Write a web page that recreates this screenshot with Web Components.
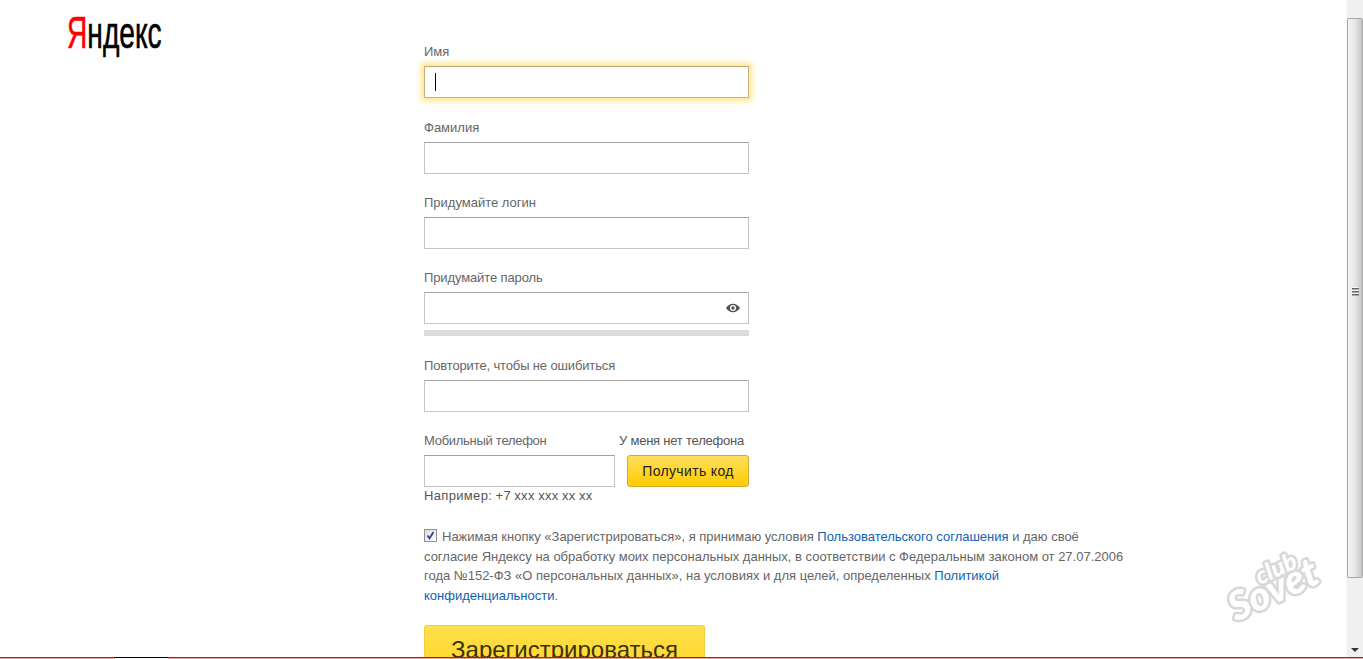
<!DOCTYPE html>
<html lang="ru"><head><meta charset="utf-8"><title>Регистрация</title>
<style>
html,body{margin:0;padding:0;height:659px;overflow:hidden;background:#fff;font:13px/15px "Liberation Sans",Arial,sans-serif;color:#555}
</style></head><body>
<y-page>
  <y-logo slot="logo"></y-logo>
  <y-field label="Имя" gap="22"><y-input focused></y-input></y-field>
  <y-field label="Фамилия"><y-input></y-input></y-field>
  <y-field label="Придумайте логин"><y-input></y-input></y-field>
  <y-field label="Придумайте пароль" gap="22" ls="-.12"><y-input eye></y-input><y-meter></y-meter></y-field>
  <y-field label="Повторите, чтобы не ошибиться" ls="-.14"><y-input></y-input></y-field>
  <y-phone></y-phone>
  <y-consent>Нажимая кнопку «Зарегистрироваться», я принимаю условия <a>Пользовательского соглашения</a> и даю своё<br>согласие Яндексу на обработку моих персональных данных, в соответствии с Федеральным законом от 27.07.2006<br>года №152-ФЗ «О персональных данных», на условиях и для целей, определенных <a>Политикой</a><br><a>конфиденциальности</a>.</y-consent>
  <y-button big>Зарегистрироваться</y-button>
  <y-scrollbar slot="bar"></y-scrollbar>
  <y-watermark slot="over"></y-watermark>
  <y-edge slot="over"></y-edge>
</y-page>
<script>
function def(name,html,init){
  customElements.define(name,class extends HTMLElement{
    constructor(){super();this.attachShadow({mode:'open'}).innerHTML=html;}
    connectedCallback(){if(init)init(this,this.shadowRoot);}
  });
}
def('y-page',`<style>
:host{display:flex;width:1363px;height:659px;position:relative;overflow:hidden}
.main{flex:1;min-width:0;position:relative;height:659px;overflow:hidden}
.logo{position:absolute;left:67px;top:9px}
.form{margin-left:424px;padding-top:44px;width:325px;display:flow-root}
</style>
<div class="main"><div class="logo"><slot name="logo"></slot></div><div class="form"><slot></slot></div></div>
<slot name="bar"></slot><slot name="over"></slot>`);
def('y-logo',`<style>
:host{display:block;height:48px;width:96px}
span.w{display:inline-block;font:44px/48px "Liberation Sans",Arial,sans-serif;color:#000;transform:scaleX(.64);transform-origin:0 0;white-space:nowrap;-webkit-text-stroke:.6px #000}
b{font-weight:400;color:#f00;-webkit-text-stroke:.6px #f00}
</style><span class="w"><b>Я</b>ндекс</span>`);
def('y-field',`<style>
:host{display:block;margin-bottom:21px}
.l{height:15px;line-height:15px;margin-bottom:7px;color:#666;white-space:nowrap}
</style><div class="l"></div><slot></slot>`,(el,s)=>{
  const l=s.querySelector('.l');l.textContent=el.getAttribute('label');
  if(el.hasAttribute('ls'))l.style.letterSpacing=el.getAttribute('ls')+'px';
  if(el.hasAttribute('gap'))el.style.marginBottom=el.getAttribute('gap')+'px';
});
def('y-input',`<style>
:host{display:block;height:32px;box-sizing:border-box;position:relative;background:#fff;border:1px solid #c4c4c4;border-top-color:#a3a3a3}
:host([focused]){border-color:#c9b27a;border-top-color:#b9a675;box-shadow:0 0 6px 3px #ffe58a}
.c{display:none;position:absolute;left:10px;top:6px;width:1px;height:18px;background:#000}
:host([focused]) .c{display:block}
svg{display:none;position:absolute;right:8px;top:9px}
:host([eye]) svg{display:block}
</style><i class="c"></i>
<svg width="14" height="12" viewBox="0 0 14 12"><path fill="#555" fill-rule="evenodd" d="M0 6C1.600 3.400 4 1.800 7 1.800S12.400 3.400 14 6c-1.600 2.600-4 4.200-7 4.200S1.600 8.600 0 6zm7-3a3 3 0 1 0 0 6 3 3 0 0 0 0-6zm0 1.300a1.700 1.700 0 1 1 0 3.400 1.700 1.700 0 0 1 0-3.400z"/></svg>`);
def('y-meter',`<style>:host{display:block;height:6px;margin-top:6px;background:#dcdcdc}</style>`);
def('y-button',`<style>
:host{display:block;box-sizing:border-box;height:32px;border:1px solid #d3a92f;border-radius:3px;background:linear-gradient(#ffdf5e,#ffcc00);color:#222;text-align:center;font-size:14px;letter-spacing:.35px;line-height:30px;white-space:nowrap}
:host([big]){width:281px;height:60px;margin-top:20px;font-size:24px;letter-spacing:0;line-height:48px;border-color:#f0d040;border-bottom:0;background:linear-gradient(#ffe04d,#ffd21a);color:#3a3208}
</style><slot></slot>`);
def('y-phone',`<style>
:host{display:block}
.t{display:flex;justify-content:space-between;height:15px;line-height:15px;margin-bottom:7px;color:#666;white-space:nowrap;padding-right:5px}
.t span:first-child{letter-spacing:-.28px}
.t span:last-child{letter-spacing:-.22px;color:#555}
.r{display:flex;gap:12px}
y-input{width:191px;flex:none}
y-button{flex:1}
.h{height:15px;line-height:15px;margin-top:1px;color:#555;white-space:nowrap;word-spacing:-.6px;letter-spacing:.33px}
</style><div class="t"><span>Мобильный телефон</span><span>У меня нет телефона</span></div>
<div class="r"><y-input></y-input><y-button>Получить код</y-button></div>
<div class="h">Например: +7 xxx xxx xx xx</div>`);
def('y-consent',`<style>
:host{display:block;width:720px;margin-top:24px;line-height:19.6px;color:#666;white-space:nowrap;letter-spacing:-.01px}
.cb{display:inline-block;box-sizing:border-box;width:13px;height:13px;vertical-align:-1px;margin-right:5px;border:1px solid #8e8f8f;background:linear-gradient(135deg,#dcdcdc,#fff)}
.cb svg{display:block}
::slotted(a){color:#0e62b5}
</style><span class="cb"><svg width="11" height="11" viewBox="0 0 11 11"><path d="M2.500 5.500l2 2.800L8.500 2" fill="none" stroke="#33429c" stroke-width="1.800"/></svg></span><slot></slot>`);
def('y-scrollbar',`<style>
:host{display:flex;flex-direction:column;width:17px;height:659px;box-sizing:border-box;background:#f0f0f0;border-left:1px solid #f6f6f6;flex:none}
.a{height:18px;flex:none;display:flex;align-items:center;justify-content:center}
.th{height:560px;flex:none;box-sizing:border-box;border:1px solid #a8a8a8;border-radius:2px;background:linear-gradient(90deg,#f4f4f4,#e8e8e8 45%,#c4c4c4);display:flex;align-items:center;justify-content:center}
.g{width:7px;height:9px;margin-bottom:14px;background:repeating-linear-gradient(#f4f4f4 0 1px,#666 1px 2px,#aaa 2px 3px)}
.sp{flex:1}
.tri{width:0;height:0;border:4px solid transparent;border-top-color:#333;border-bottom:0}
</style><div class="a"></div><div class="th"><div class="g"></div></div><div class="sp"></div><div class="a"><i class="tri"></i></div>`);
def('y-watermark',`<style>
:host{position:absolute;left:1225px;top:545px;width:120px;height:90px;pointer-events:none;display:block}
svg{display:block;overflow:visible}
text{fill:#fff;stroke:#d8d8d8;stroke-width:5;stroke-linejoin:round;paint-order:stroke;font-family:Lato,"Liberation Sans",sans-serif;font-style:italic;font-weight:900}
</style><svg width="120" height="90" viewBox="0 0 120 90"><text x="11" y="77" font-size="40" transform="rotate(-25 11 77)">Sovet</text><text x="35" y="40" font-size="24" transform="rotate(-25 35 40)">club</text></svg>`);
def('y-edge',`<style>
:host{position:absolute;left:0;right:0;top:657px;height:2px;display:block;background:linear-gradient(#8f2b2b 1px,#ff9a9a 1px)}
i{position:absolute;left:115px;width:53px;top:0;height:1px;background:#000}
u{position:absolute;left:115px;width:53px;top:1px;height:1px;background:#fff}
</style><i></i><u></u>`);
</script>
</body></html>
